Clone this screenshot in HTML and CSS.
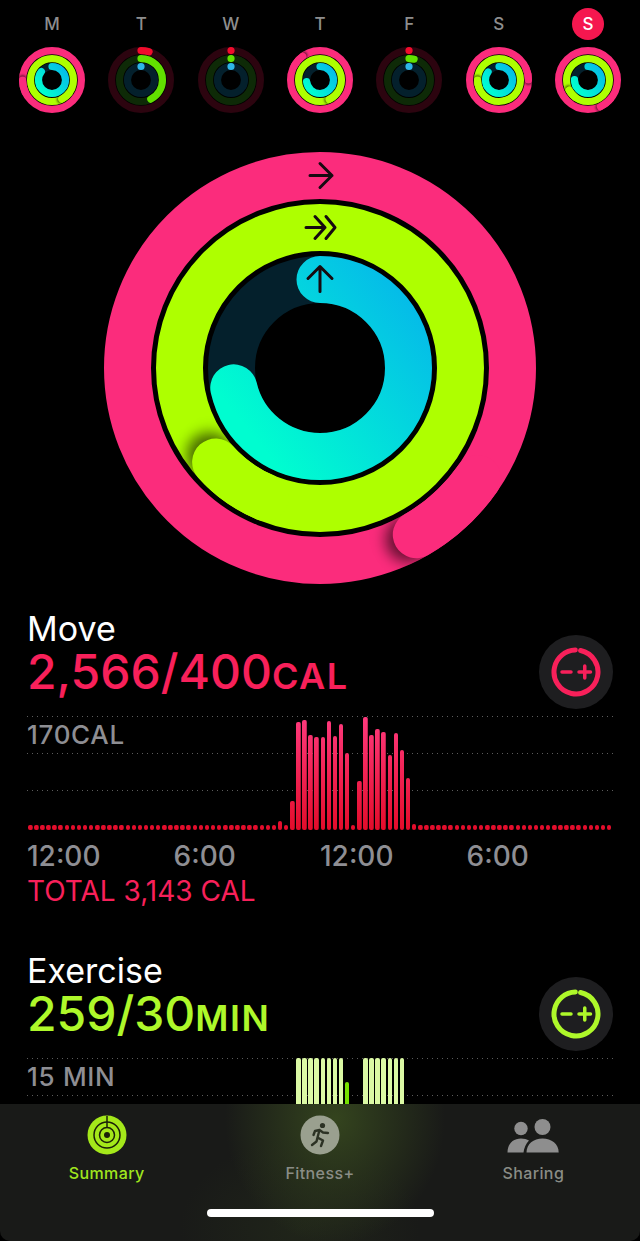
FILE: index.html
```html
<!doctype html>
<html lang="en">
<head>
    <meta charset="UTF-8">
    <meta name="viewport" content="width=device-width, initial-scale=1.0">
    <title>Activity</title>
    <link rel="stylesheet" href="styles.css">
</head>
<body>
<div id="page">
    <div class="week">
        <div class="day">
            <span class="day-name">M</span>
            <svg class="ring-small" viewBox="-216 -216 432 432">
                <use href="#tracks-full"/>
                <use href="#move-end" transform="rotate(270)"/>
                <use href="#stand-end" transform="rotate(153)"/>
                <circle class="arc arc-blue" r="88.500" pathLength="360" stroke-dasharray="307 360" transform="rotate(-90)" stroke="url(#blue-grad)"/>
            </svg>
        </div>
        <div class="day">
            <span class="day-name">T</span>
            <svg class="ring-small" viewBox="-216 -216 432 432">
                <use href="#tracks-dim"/>
                <circle class="arc arc-red" r="192.500" pathLength="360" stroke-dasharray="16 360" transform="rotate(-90)"/>
                <circle class="arc arc-lime" r="140.500" pathLength="360" stroke-dasharray="152 360" transform="rotate(-90)"/>
                <circle class="arc arc-sky" r="88.500" pathLength="360" stroke-dasharray=".1 360" transform="rotate(-90)"/>
            </svg>
        </div>
        <div class="day">
            <span class="day-name">W</span>
            <svg class="ring-small" viewBox="-216 -216 432 432">
                <use href="#tracks-dim"/>
                <circle class="arc arc-red" r="192.500" pathLength="360" stroke-dasharray=".1 360" transform="rotate(-90)"/>
                <circle class="arc arc-lime" r="140.500" pathLength="360" stroke-dasharray=".1 360" transform="rotate(-90)"/>
                <circle class="arc arc-sky" r="88.500" pathLength="360" stroke-dasharray=".1 360" transform="rotate(-90)"/>
            </svg>
        </div>
        <div class="day">
            <span class="day-name">T</span>
            <svg class="ring-small" viewBox="-216 -216 432 432">
                <use href="#tracks-full"/>
                <use href="#move-end" transform="rotate(324)"/>
                <use href="#stand-end" transform="rotate(155)"/>
                <circle class="arc arc-blue" r="88.500" pathLength="360" stroke-dasharray="262 360" transform="rotate(-90)" stroke="url(#blue-grad)"/>
            </svg>
        </div>
        <div class="day">
            <span class="day-name">F</span>
            <svg class="ring-small" viewBox="-216 -216 432 432">
                <use href="#tracks-dim"/>
                <circle class="arc arc-red" r="192.500" pathLength="360" stroke-dasharray=".1 360" transform="rotate(-90)"/>
                <circle class="arc arc-lime" r="140.500" pathLength="360" stroke-dasharray="14 360" transform="rotate(-90)"/>
                <circle class="arc arc-sky" r="88.500" pathLength="360" stroke-dasharray=".1 360" transform="rotate(-90)"/>
            </svg>
        </div>
        <div class="day">
            <span class="day-name">S</span>
            <svg class="ring-small" viewBox="-216 -216 432 432">
                <use href="#tracks-full"/>
                <use href="#move-end" transform="rotate(90)"/>
                <use href="#stand-end" transform="rotate(270)"/>
                <circle class="arc arc-blue" r="88.500" pathLength="360" stroke-dasharray="305 360" transform="rotate(-90)" stroke="url(#blue-grad)"/>
            </svg>
        </div>
        <div class="day">
            <span class="day-name day-today">S</span>
            <svg class="ring-small" viewBox="-216 -216 432 432">
                <use href="#tracks-full"/>
                <use href="#move-end" transform="rotate(155)"/>
                <use href="#stand-end" transform="rotate(242)"/>
                <circle class="arc arc-blue" r="88.500" pathLength="360" stroke-dasharray="270 360" transform="rotate(-90)" stroke="url(#blue-grad)"/>
            </svg>
        </div>
    </div>

    <div class="hero">
        <svg class="ring-big" width="432" height="432" viewBox="-216 -216 432 432">
            <defs>
                <linearGradient id="blue-grad" gradientUnits="userSpaceOnUse" gradientTransform="rotate(90)" x1="70" y1="-90" x2="-90" y2="40">
                    <stop offset="0" stop-color="#05bce8"/>
                    <stop offset="1" stop-color="#00fdd0"/>
                </linearGradient>
                <filter id="blur" x="-60%" y="-60%" width="220%" height="220%">
                    <feGaussianBlur stdDeviation="7"/>
                </filter>
                <mask id="pink-mask" maskUnits="userSpaceOnUse" x="-216" y="-216" width="432" height="432">
                    <circle class="mask-line" r="192.500" stroke-width="47"/>
                </mask>
                <mask id="lime-mask" maskUnits="userSpaceOnUse" x="-216" y="-216" width="432" height="432">
                    <circle class="mask-line" r="140.500" stroke-width="47"/>
                </mask>
                <g id="tracks-full">
                    <circle class="track-move" r="192.500"/>
                    <circle class="track-stand" r="140.500"/>
                    <circle class="track-blue" r="88.500"/>
                </g>
                <g id="tracks-dim">
                    <circle class="track-move track-move-dim" r="192.500"/>
                    <circle class="track-stand track-stand-dim" r="140.500"/>
                    <circle class="track-blue" r="88.500"/>
                </g>
                <g id="move-end">
                    <g mask="url(#pink-mask)">
                        <circle class="shade" cx="9" cy="-192.500" r="23" filter="url(#blur)"/>
                    </g>
                    <circle class="arc end-pink" r="192.500" pathLength="360" stroke-dasharray="25 335" transform="rotate(-115)"/>
                </g>
                <g id="stand-end">
                    <g mask="url(#lime-mask)">
                        <circle class="shade" cx="9" cy="-140.500" r="23" filter="url(#blur)"/>
                    </g>
                    <circle class="arc end-lime" r="140.500" pathLength="360" stroke-dasharray="25 335" transform="rotate(-115)"/>
                </g>
            </defs>
            <use href="#tracks-full"/>
            <use href="#move-end" transform="rotate(150)"/>
            <use href="#stand-end" transform="rotate(228)"/>
            <circle class="arc arc-blue" r="88.500" pathLength="360" stroke-dasharray="257 360" transform="rotate(-90)" stroke="url(#blue-grad)"/>
            <path class="arrow" d="M-10 -192.500H12M0 -204.500L12 -192.500L0 -180.500"/>
            <path class="arrow" d="M-14 -140.500H5M-5 -151.500L5 -140.500L-5 -129.500M6 -151.500L15 -140.500L6 -129.500"/>
            <path class="arrow" d="M0 -76.500V-101.500M-12 -89.500L0 -101.500L12 -89.500"/>
        </svg>
    </div>

    <div class="stat stat-move">
        <div class="stat-head">
            <div class="stat-text">
                <div class="stat-title">Move</div>
                <div class="stat-value">2,566/400<span class="stat-unit">CAL</span></div>
            </div>
            <div class="adjust">
                <svg width="50" height="50" viewBox="-25 -25 50 50">
                    <circle class="adjust-ring" r="22" pathLength="360" stroke-dasharray="346 14" transform="rotate(-78)"/>
                    <path class="adjust-sign" d="M-14 0H-5M3 0H14.500M8.750 -6V6"/>
                </svg>
            </div>
        </div>
        <div class="chart">
            <div class="chart-label">170CAL</div>
            <div class="bars">
                <i></i><i></i><i></i><i></i><i></i><i></i><i></i><i></i><i></i><i></i>
                <i></i><i></i><i></i><i></i><i></i><i></i><i></i><i></i><i></i><i></i>
                <i></i><i></i><i></i><i></i><i></i><i></i><i></i><i></i><i></i><i></i>
                <i></i><i></i><i></i><i></i><i></i><i></i><i></i><i></i><i></i><i></i>
                <i></i>
                <i style="height:9px"></i><i></i><i style="height:29px"></i><i style="height:108px"></i><i style="height:110px"></i>
                <i style="height:95px"></i><i style="height:93px"></i><i style="height:93px"></i><i style="height:109px"></i><i style="height:94px"></i>
                <i style="height:106px"></i><i style="height:77px"></i><i></i><i style="height:49px"></i><i style="height:113px"></i>
                <i style="height:95px"></i><i style="height:101px"></i><i style="height:98px"></i><i style="height:75px"></i><i style="height:97px"></i>
                <i style="height:80px"></i><i style="height:52px"></i><i style="height:6px"></i>
                <i></i><i></i><i></i><i></i><i></i><i></i><i></i><i></i><i></i><i></i>
                <i></i><i></i><i></i><i></i><i></i><i></i><i></i><i></i><i></i><i></i>
                <i></i><i></i><i></i><i></i><i></i><i></i><i></i><i></i><i></i><i></i>
                <i></i><i></i>
            </div>
        </div>
        <div class="axis">
            <span>12:00</span>
            <span>6:00</span>
            <span>12:00</span>
            <span>6:00</span>
        </div>
        <div class="stat-total">TOTAL 3,143 CAL</div>
    </div>

    <div class="stat stat-exercise">
        <div class="stat-head">
            <div class="stat-text">
                <div class="stat-title">Exercise</div>
                <div class="stat-value">259/30<span class="stat-unit">MIN</span></div>
            </div>
            <div class="adjust">
                <svg width="50" height="50" viewBox="-25 -25 50 50">
                    <circle class="adjust-ring" r="22" pathLength="360" stroke-dasharray="346 14" transform="rotate(-78)"/>
                    <path class="adjust-sign" d="M-14 0H-5M3 0H14.500M8.750 -6V6"/>
                </svg>
            </div>
        </div>
        <div class="chart">
            <div class="chart-label">15 MIN</div>
            <div class="bars">
                <i></i><i></i><i></i><i></i><i></i><i></i><i></i><i></i><i></i><i></i>
                <i></i><i></i><i></i><i></i><i></i><i></i><i></i><i></i><i></i><i></i>
                <i></i><i></i><i></i><i></i><i></i><i></i><i></i><i></i><i></i><i></i>
                <i></i><i></i><i></i><i></i><i></i><i></i><i></i><i></i><i></i><i></i>
                <i></i><i></i><i></i><i></i>
                <i class="over"></i><i class="over"></i><i class="over"></i><i class="over"></i>
                <i class="over"></i><i class="over"></i><i class="over"></i><i class="over"></i>
                <i style="height:90px"></i><i></i><i></i>
                <i class="over"></i><i class="over"></i><i class="over"></i><i class="over"></i>
                <i class="over"></i><i class="over"></i><i class="over"></i>
                <i style="height:68px"></i>
                <i></i><i></i><i></i><i></i><i></i><i></i><i></i><i></i><i></i><i></i>
                <i></i><i></i><i></i><i></i><i></i><i></i><i></i><i></i><i></i><i></i>
                <i></i><i></i><i></i><i></i><i></i><i></i><i></i><i></i><i></i><i></i>
                <i></i><i></i><i></i>
            </div>
        </div>
    </div>

    <div class="tabbar">
        <div class="tabs">
            <a class="tab tab-on" href="javascript:;">
                <svg width="40" height="40" viewBox="-20 -20 40 40">
                    <circle class="summary-disc" r="19.500"/>
                    <circle class="summary-line" r="13"/>
                    <circle class="summary-line" r="7.500"/>
                    <circle class="summary-dot" r="3"/>
                    <path class="summary-line" d="M0 -19V-7.500"/>
                </svg>
                <span>Summary</span>
            </a>
            <a class="tab" href="javascript:;">
                <svg width="40" height="40" viewBox="-20 -20 40 40">
                    <circle class="fitness-disc" r="19.500"/>
                    <circle class="runner-head" cx="2.500" cy="-9.500" r="2.600"/>
                    <path class="runner" d="M-.5 -5L-2.500 2.500L3 5.500L1 11M-2.500 2.500L-3.500 6.500L-8 10M-.5 -5L3 -2.500L8 -2M-.5 -5L-5 -4L-6.500 0"/>
                </svg>
                <span>Fitness+</span>
            </a>
            <a class="tab" href="javascript:;">
                <svg width="54" height="40" viewBox="0 0 54 40">
                    <circle class="share" cx="15" cy="13.500" r="6.700"/>
                    <circle class="share" cx="36.500" cy="12" r="8"/>
                    <path class="share" d="M1.500 37.500C1.500 29 7 23.500 15 23.500C18 23.500 21 24.200 23 25.500C20 28.500 18 33 17.500 37.500Z"/>
                    <path class="share" d="M20.500 37.500C20.500 29 27.500 23.500 36.500 23.500C45.500 23.500 52.700 29 52.700 37.500Z"/>
                </svg>
                <span>Sharing</span>
            </a>
        </div>
        <div class="home-bar"></div>
    </div>
</div>
</body>
</html>
```

FILE: styles.css
```css
*{
    margin: 0;
    padding: 0;
    box-sizing: border-box;
}

body{
    background-color: #000;
    font-family: Inter, "Liberation Sans", sans-serif;
}

#page{
    position: relative;
    width: 640px;
    height: 1241px;
    overflow: hidden;
    background-color: #000;
}

/* week row */
.week{
    display: flex;
    justify-content: space-between;
    padding: 8px 19px 0;
}
.day{
    display: flex;
    flex-direction: column;
    align-items: center;
    gap: 7px;
    width: 66px;
}
.day-name{
    width: 32px;
    height: 32px;
    border-radius: 50%;
    text-align: center;
    line-height: 32px;
    font-size: 17px;
    font-weight: 500;
    color: #8e8e8e;
}
.day-today{
    background-color: #f5174f;
    color: #fff;
}
.ring-small{
    display: block;
    width: 66px;
    height: 66px;
}

/* rings */
.hero{
    display: flex;
    justify-content: center;
    margin-top: 38.500px;
}
.ring-big{
    display: block;
}
.track-move,
.track-stand,
.track-blue,
.arc,
.mask-line,
.adjust-ring,
.summary-line{
    fill: none;
}
.track-move,
.track-stand,
.track-blue,
.arc{
    stroke-width: 47px;
}
.track-move{
    stroke: #fb2c7c;
}
.track-stand{
    stroke: #aeff00;
}
.track-blue{
    stroke: #04202c;
}
.track-move-dim{
    stroke: #2c040f;
}
.track-stand-dim{
    stroke: #0e2a07;
}
.arc{
    stroke-linecap: round;
}
.arc-red{
    stroke: #f00c2c;
}
.arc-lime{
    stroke: #62e000;
}
.arc-sky{
    stroke: #2fb6e8;
}
.end-pink{
    stroke: #fb2c7c;
}
.end-lime{
    stroke: #aeff00;
}
.mask-line{
    stroke: #fff;
}
.shade{
    fill: rgba(0,0,0,.6);
}
.arrow{
    fill: none;
    stroke: #160a10;
    stroke-width: 3px;
    stroke-linecap: round;
    stroke-linejoin: round;
}

/* stat blocks */
.stat{
    height: 342px;
    padding: 0 27px;
}
.stat-move{
    margin-top: 22.500px;
    color: #f8205a;
}
.stat-exercise{
    color: #aef82a;
}
.stat-head{
    display: flex;
    justify-content: space-between;
    height: 110px;
}
.stat-text{
    padding-top: 5px;
}
.stat-title{
    font-size: 34px;
    line-height: 36px;
    color: #fff;
}
.stat-value{
    margin-top: 4px;
    font-size: 48px;
    font-weight: 500;
    line-height: 42px;
}
.stat-unit{
    font-size: 36px;
    font-weight: 600;
    letter-spacing: 1.500px;
}
.adjust{
    display: flex;
    justify-content: center;
    align-items: center;
    align-self: flex-end;
    width: 74px;
    height: 74px;
    margin-bottom: 7px;
    border-radius: 50%;
    background-color: #1e1e20;
}
.adjust svg{
    display: block;
}
.adjust-ring{
    stroke: currentColor;
    stroke-width: 5px;
    stroke-linecap: round;
}
.adjust-sign{
    fill: none;
    stroke: currentColor;
    stroke-width: 3.500px;
    stroke-linecap: round;
}

/* chart, the dotted rows sit in the background */
.chart{
    display: grid;
    height: 114px;
    background-image:
        linear-gradient(90deg,#5c5c5c 1px,transparent 1px),
        linear-gradient(90deg,#5c5c5c 1px,transparent 1px),
        linear-gradient(90deg,#5c5c5c 1px,transparent 1px);
    background-size: 5px 1px;
    background-position: 0 0, 0 37px, 0 74px;
    background-repeat: repeat-x;
}
.chart-label,
.bars{
    grid-area: 1 / 1;
}
.chart-label{
    padding-top: 4px;
    font-size: 26px;
    font-weight: 500;
    letter-spacing: .7px;
    line-height: 30px;
    color: #8e8e93;
}
.bars{
    display: flex;
    justify-content: space-between;
    align-items: flex-end;
    padding: 0 1px;
}
.bars i{
    display: block;
    width: 4.500px;
    height: 5px;
    border-radius: 2px;
    background-image: linear-gradient(#ff3a7e,#e30c2a);
    background-size: 100% 114px;
    background-position: bottom;
}
.stat-exercise .bars i{
    background-image: linear-gradient(#7fe600,#62d400);
}
.stat-exercise .bars .over{
    height: 114px;
    background-image: none;
    background-color: #dbf9a4;
}
.axis{
    display: flex;
    margin-top: 10px;
    font-size: 28px;
    font-weight: 500;
    line-height: 32px;
    color: #8e8e93;
}
.axis span{
    flex: 0 0 146.500px;
}
.stat-total{
    margin-top: 2px;
    font-size: 28px;
    line-height: 34px;
}

/* tab bar */
.tabbar{
    position: absolute;
    left: 0;
    right: 0;
    bottom: 0;
    height: 137px;
    border-radius: 0 0 10px 10px;
    background-color: #191a18;
    background-image:
        radial-gradient(ellipse 110px 125px at 335px 15px,#34441e,rgba(52,68,30,0)),
        radial-gradient(ellipse 120px 90px at 300px 125px,rgba(52,68,30,.25),rgba(52,68,30,0));
}
.tabs{
    display: flex;
    padding-top: 11px;
}
.tab{
    flex: 1;
    display: flex;
    flex-direction: column;
    align-items: center;
    gap: 7px;
    font-size: 16px;
    font-weight: 500;
    letter-spacing: .4px;
    line-height: 22px;
    color: #8a8d86;
    text-decoration: none;
}
.tab svg{
    display: block;
}
.tab-on{
    color: #a0e61e;
}
.summary-disc{
    fill: #a4e81a;
}
.summary-line{
    stroke: #1a2008;
    stroke-width: 1.500px;
}
.summary-dot{
    fill: #1a2008;
}
.fitness-disc{
    fill: #9aa08f;
}
.runner-head{
    fill: #2c3224;
}
.runner{
    fill: none;
    stroke: #2c3224;
    stroke-width: 2.400px;
    stroke-linecap: round;
    stroke-linejoin: round;
}
.share{
    fill: #8e8e8e;
}
.home-bar{
    width: 227px;
    height: 8px;
    margin: 25px auto 0;
    border-radius: 4px;
    background-color: #fff;
}
```
